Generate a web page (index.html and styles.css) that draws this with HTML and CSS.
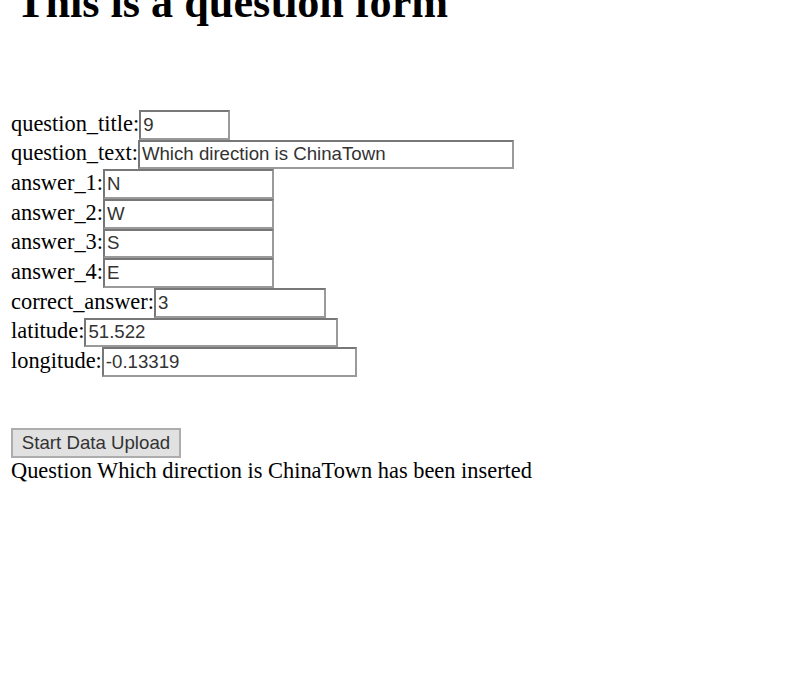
FILE: index.html
```html
<!DOCTYPE html>
<html>
<head>
<meta charset="utf-8">
<title>Question form</title>
<link rel="stylesheet" href="styles.css">
</head>
<body>
<h1 class="title">This is a question form</h1>
<form class="qform">
  <div class="row">question_title:<input class="in in-title" type="text" value="9"></div>
  <div class="row">question_text:<input class="in in-text" type="text" value="Which direction is ChinaTown"></div>
  <div class="row">answer_1:<input class="in in-ans" type="text" value="N"></div>
  <div class="row">answer_2:<input class="in in-ans" type="text" value="W"></div>
  <div class="row">answer_3:<input class="in in-ans" type="text" value="S"></div>
  <div class="row">answer_4:<input class="in in-ans" type="text" value="E"></div>
  <div class="row">correct_answer:<input class="in in-correct" type="text" value="3"></div>
  <div class="row">latitude:<input class="in in-lat" type="text" value="51.522"></div>
  <div class="row">longitude:<input class="in in-lng" type="text" value="-0.13319"></div>
  <button class="btn" type="button">Start Data Upload</button>
</form>
<div class="status">Question Which direction is ChinaTown has been inserted</div>
</body>
</html>
```
FILE: styles.css
```css
html, body {
  margin: 0;
  padding: 0;
  background: #ffffff;
}
body {
  padding: 0 11px;
  font-family: "Liberation Serif", "Times New Roman", serif;
  font-size: 22.4px;
  color: #000;
}
.title {
  font-size: 44.2px;
  font-weight: bold;
  margin: -23.2px 0 0 5px;
  line-height: normal;
}
.qform {
  margin-top: 82px;
}
.row {
  display: flex;
  align-items: baseline;
  white-space: nowrap;
}
.in {
  box-sizing: border-box;
  height: 29.7px;
  margin: 0;
  padding: 1px 1px 1px 2px;
  border: 2px solid #8a8a8a;
  border-color: #777 #9a9a9a #9a9a9a #777;
  font-family: "Liberation Sans", Arial, sans-serif;
  font-size: 18.67px;
  color: #333;
  background: #fff;
  outline: none;
}
.in-title { width: 91px; }
.in-text { width: 376px; }
.in-ans { width: 171px; }
.in-correct { width: 172px; }
.in-lat { width: 254px; }
.in-lng { width: 255px; }
.btn {
  display: block;
  box-sizing: border-box;
  margin: 51px 0 0 0;
  width: 170px;
  height: 30px;
  padding: 0 8px;
  background: #e1e1e1;
  border: 2px solid #adadad;
  font-family: "Liberation Sans", Arial, sans-serif;
  font-size: 18.67px;
  color: #333;
}
.status {
  line-height: normal;
}
```
